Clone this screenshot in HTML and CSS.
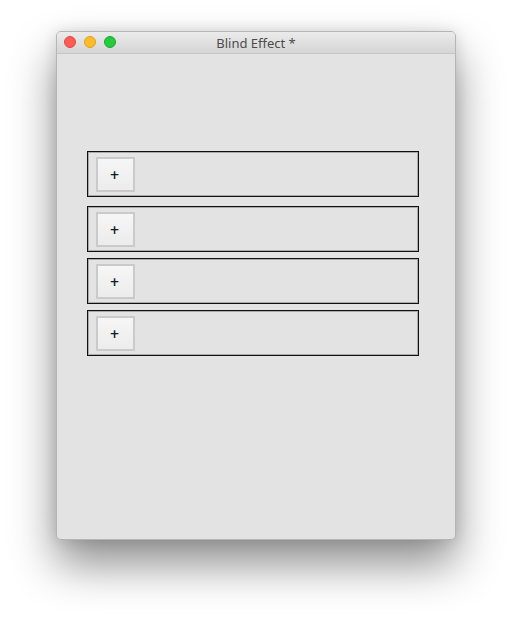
FILE: index.html
```html
<!DOCTYPE html>
<html lang="en">
<head>
    <meta charset="UTF-8">
    <title>Blind Effect *</title>
    <link rel="stylesheet" href="styles.css">
</head>
<body>
    <div class="window">
        <div class="titlebar">
            <div class="lights">
                <span class="light red"></span>
                <span class="light yellow"></span>
                <span class="light green"></span>
            </div>
            <div class="title">Blind Effect *</div>
        </div>
        <div class="content">
            <div class="blinds">
                <div class="blind first"><button class="add">+</button></div>
                <div class="blind"><button class="add">+</button></div>
                <div class="blind"><button class="add">+</button></div>
                <div class="blind"><button class="add">+</button></div>
            </div>
        </div>
    </div>
</body>
</html>
```

FILE: styles.css
```css
* {
    margin: 0;
    padding: 0;
    box-sizing: border-box;
}

html, body {
    height: 100%;
}

body {
    background: #fff;
    font-family: 'Liberation Sans', Arial, sans-serif;
    padding: 31px 0 0 56px;
    min-height: 620px;
}

.window {
    width: 400px;
    height: 509px;
    background: #e3e3e3;
    border-radius: 5px;
    border: 1px solid #b5b5b5;
    box-shadow: 0 24px 45px rgba(0,0,0,0.45), 0 0 14px rgba(0,0,0,0.12);
    overflow: hidden;
    display: flex;
    flex-direction: column;
}

.titlebar {
    height: 22px;
    background: linear-gradient(#ebebeb, #d5d5d5);
    border-bottom: 1px solid #c6c6c6;
    position: relative;
    display: flex;
    align-items: center;
    justify-content: center;
    flex-shrink: 0;
}

.lights {
    position: absolute;
    left: 7px;
    top: 4px;
    display: flex;
    gap: 8px;
}

.light {
    width: 12px;
    height: 12px;
    border-radius: 50%;
}

.red { background: #fc5b57; border: 1px solid #e2463f; }
.yellow { background: #fdbb2e; border: 1px solid #e1a116; }
.green { background: #28c83f; border: 1px solid #15ab29; }

.title {
    font-family: 'Noto Sans', 'Liberation Sans', sans-serif;
    font-size: 13px;
    color: #4c4c4c;
}

.content {
    flex: 1;
    padding: 97px 0 0 30px;
}

.blinds {
    display: flex;
    flex-direction: column;
    gap: 6px;
    width: 332px;
}

.blind {
    height: 46px;
    border: 1px solid #111;
    box-shadow: inset 0 0 0 1px rgba(0,0,0,0.25);
    padding: 5px 0 0 8px;
}

.blind.first {
    margin-bottom: 3px;
}

.add {
    width: 39px;
    height: 35px;
    background: linear-gradient(#f6f6f6, #ececec);
    border: 2px solid #cacaca;
    font-family: 'DejaVu Sans', sans-serif;
    font-size: 12px;
    font-weight: bold;
    color: #0d1a2b;
    padding-right: 2px;
    display: flex;
    align-items: center;
    justify-content: center;
}
```
